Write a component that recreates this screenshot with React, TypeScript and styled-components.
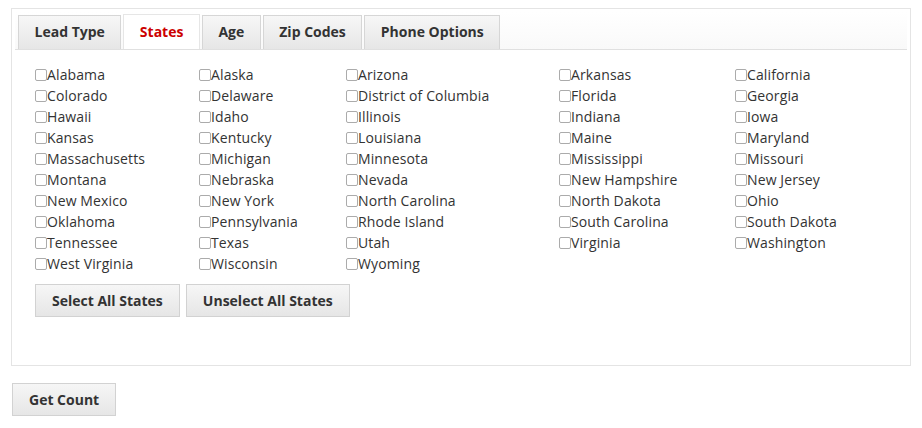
import React from "react";
import styled, { createGlobalStyle } from "styled-components";

const GlobalStyle = createGlobalStyle`
  html, body {
    margin: 0;
    padding: 0;
    background: #fff;
    font-family: "Open Sans", "Liberation Sans", sans-serif;
    color: #333;
  }
`;

const Page = styled.div`
  padding: 8px 11px;
`;

const Panel = styled.div`
  width: 900px;
  box-sizing: border-box;
  border: 1px solid #e4e4e4;
  padding: 3px 3px 0 3px;
`;

const TabStrip = styled.div`
  display: flex;
  gap: 2px;
  padding: 3px 3px 0 3px;
  border-bottom: 1px solid #e0e0e0;
  background: linear-gradient(#ffffff, #f9f9f9);
`;

const Tab = styled.div<{ active?: boolean }>`
  padding: 0 15.5px;
  box-sizing: border-box;
  border: 1px solid ${({ active }) => (active ? "#e6e6e6" : "#d6d6d6")};
  border-bottom: none;
  font-size: 14px;
  font-weight: 700;
  color: ${({ active }) => (active ? "#cc0000" : "#333")};
  background: ${({ active }) =>
    active ? "#fff" : "linear-gradient(#f7f7f7, #e6e6e6)"};
  margin-top: ${({ active }) => (active ? "-1px" : "0")};
  margin-bottom: ${({ active }) => (active ? "-1px" : "0")};
  height: ${({ active }) => (active ? "35px" : "34px")};
  line-height: ${({ active }) => (active ? "33px" : "32px")};
`;

const Content = styled.div`
  padding: 14px 20px 48px 20px;
`;

const StateGrid = styled.div`
  display: grid;
  grid-template-columns: 164px 147px 213px 176px 1fr;
`;

const StateLabel = styled.label`
  display: flex;
  align-items: center;
  font-size: 14px;
  line-height: 21px;
  letter-spacing: 0.12px;
  color: #333;
  white-space: nowrap;
`;

const Box = styled.input`
  appearance: none;
  width: 12px;
  height: 12px;
  margin: 1px 0 0 0;
  border: 1px solid #ababab;
  border-radius: 2px;
  background: #fff;
  box-sizing: border-box;
  flex: none;
`;

const ButtonRow = styled.div`
  display: flex;
  gap: 6px;
  margin-top: 10px;
`;

const Button = styled.button`
  height: 33px;
  padding: 0 16px;
  border: 1px solid #d2d2d2;
  background: linear-gradient(#f6f6f6, #e6e6e6);
  font-family: "Open Sans", "Liberation Sans", sans-serif;
  font-size: 14px;
  font-weight: 700;
  color: #333;
  cursor: pointer;
`;

const Footer = styled.div`
  margin-top: 17px;
  margin-left: 1px;
`;

const columns: string[][] = [
  ["Alabama", "Colorado", "Hawaii", "Kansas", "Massachusetts", "Montana", "New Mexico", "Oklahoma", "Tennessee", "West Virginia"],
  ["Alaska", "Delaware", "Idaho", "Kentucky", "Michigan", "Nebraska", "New York", "Pennsylvania", "Texas", "Wisconsin"],
  ["Arizona", "District of Columbia", "Illinois", "Louisiana", "Minnesota", "Nevada", "North Carolina", "Rhode Island", "Utah", "Wyoming"],
  ["Arkansas", "Florida", "Indiana", "Maine", "Mississippi", "New Hampshire", "North Dakota", "South Carolina", "Virginia"],
  ["California", "Georgia", "Iowa", "Maryland", "Missouri", "New Jersey", "Ohio", "South Dakota", "Washington"],
];

const rows: (string | null)[] = [];
for (let r = 0; r < 10; r++) {
  for (let c = 0; c < 5; c++) {
    rows.push(columns[c][r] ?? null);
  }
}

const tabs = ["Lead Type", "States", "Age", "Zip Codes", "Phone Options"];

export default function App() {
  return (
    <Page>
      <GlobalStyle />
      <Panel>
        <TabStrip>
          {tabs.map((t) => (
            <Tab key={t} active={t === "States"}>
              {t}
            </Tab>
          ))}
        </TabStrip>
        <Content>
          <StateGrid>
            {rows.map((s, i) =>
              s ? (
                <StateLabel key={s}>
                  <Box type="checkbox" />
                  {s}
                </StateLabel>
              ) : (
                <span key={`empty-${i}`} />
              )
            )}
          </StateGrid>
          <ButtonRow>
            <Button>Select All States</Button>
            <Button>Unselect All States</Button>
          </ButtonRow>
        </Content>
      </Panel>
      <Footer>
        <Button>Get Count</Button>
      </Footer>
    </Page>
  );
}
